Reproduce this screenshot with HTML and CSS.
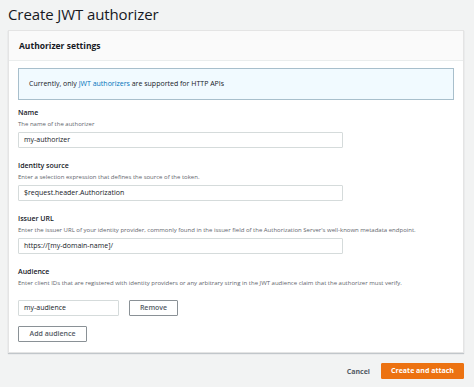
FILE: index.html
```html
<!DOCTYPE html>
<html lang="en">
<head>
  <meta charset="UTF-8">
  <meta name="viewport" content="width=device-width, initial-scale=1.0">
  <title>Create JWT authorizer</title>
  <link rel="stylesheet" href="styles.css">
</head>
<body>
  <div class="page">
    <h1 class="title">Create JWT authorizer</h1>
    <div class="card">
      <div class="card-header">Authorizer settings</div>
      <div class="card-body">
        <div class="info">Currently, only <a href="#">JWT authorizers</a> are supported for HTTP APIs</div>

        <div class="field">
          <div class="label">Name</div>
          <div class="desc">The name of the authorizer</div>
          <div class="input">my-authorizer</div>
        </div>

        <div class="field">
          <div class="label">Identity source</div>
          <div class="desc">Enter a selection expression that defines the source of the token.</div>
          <div class="input">$request.header.Authorization</div>
        </div>

        <div class="field">
          <div class="label">Issuer URL</div>
          <div class="desc">Enter the issuer URL of your identity provider, commonly found in the issuer field of the Authorization Server's well-known metadata endpoint.</div>
          <div class="input">https://[my-domain-name]/</div>
        </div>

        <div class="field">
          <div class="label">Audience</div>
          <div class="desc">Enter client IDs that are registered with identity providers or any arbitrary string in the JWT audience claim that the authorizer must verify.</div>
          <div class="audience-row">
            <div class="input small">my-audience</div>
            <button class="btn">Remove</button>
          </div>
          <button class="btn add">Add audience</button>
        </div>
      </div>
    </div>
    <div class="footer">
      <a href="#" class="cancel">Cancel</a>
      <button class="btn primary">Create and attach</button>
    </div>
  </div>
</body>
</html>
```

FILE: styles.css
```css
body, html {
  margin: 0;
  padding: 0;
  background: #f2f3f3;
  font-family: 'Open Sans', 'Noto Sans', sans-serif;
  color: #16191f;
}
.page {
  padding: 0 10px 0 8px;
}
.title {
  margin: 0;
  padding-top: 1px;
  font-size: 15px;
  font-weight: 400;
  line-height: 26px;
  letter-spacing: -0.1px;
}
.card {
  margin-top: 3px;
  background: #fff;
  border: 1px solid #e4e4e4;
  box-shadow: 0 1px 1px rgba(0, 22, 40, 0.2);
}
.card-header {
  background: #fafafa;
  border-bottom: 1px solid #eaeded;
  padding: 0 10px;
  height: 29px;
  line-height: 29px;
  font-size: 8.5px;
  font-weight: 700;
}
.card-body {
  padding: 7px 9px 10px 9px;
}
.info {
  background: #f1faff;
  border: 1px solid #a8bfcc;
  height: 30px;
  line-height: 30px;
  padding: 0 10px;
  font-size: 7px;
}
.info a {
  color: #0073bb;
  text-decoration: none;
}
.field {
  margin-top: 6px;
}
.field + .field {
  margin-top: 11px;
}
.label {
  font-size: 7px;
  font-weight: 600;
  line-height: 13px;
}
.desc {
  font-size: 6px;
  color: #5f666d;
  line-height: 11px;
}
.input {
  margin-top: 2px;
  width: 313px;
  height: 14px;
  line-height: 14px;
  border: 1px solid #d5dbdb;
  border-radius: 1px;
  padding: 0 5px;
  font-size: 7px;
  background: #fff;
}
.audience-row {
  display: flex;
  gap: 10px;
  margin-top: 11px;
}
.input.small {
  margin-top: 0;
  width: 89px;
}
.btn {
  font-family: inherit;
  font-size: 7px;
  background: #fff;
  border: 1px solid #8a9196;
  border-radius: 1px;
  color: #545b64;
  height: 16px;
  padding: 0 12px;
  line-height: 14px;
  font-weight: 600;
  cursor: pointer;
}
.audience-row .btn {
  width: 49px;
  padding: 0;
}
.add {
  margin-top: 10px;
  width: 69px;
  padding: 0;
}
.footer {
  display: flex;
  justify-content: flex-end;
  align-items: center;
  gap: 11px;
  margin-top: 10px;
}
.cancel {
  font-size: 7px;
  font-weight: 700;
  color: #545b64;
  text-decoration: none;
}
.btn.primary {
  background: #ec7211;
  border-color: #ec7211;
  color: #fff;
  font-weight: 700;
  width: 83px;
  padding: 0;
}
```
